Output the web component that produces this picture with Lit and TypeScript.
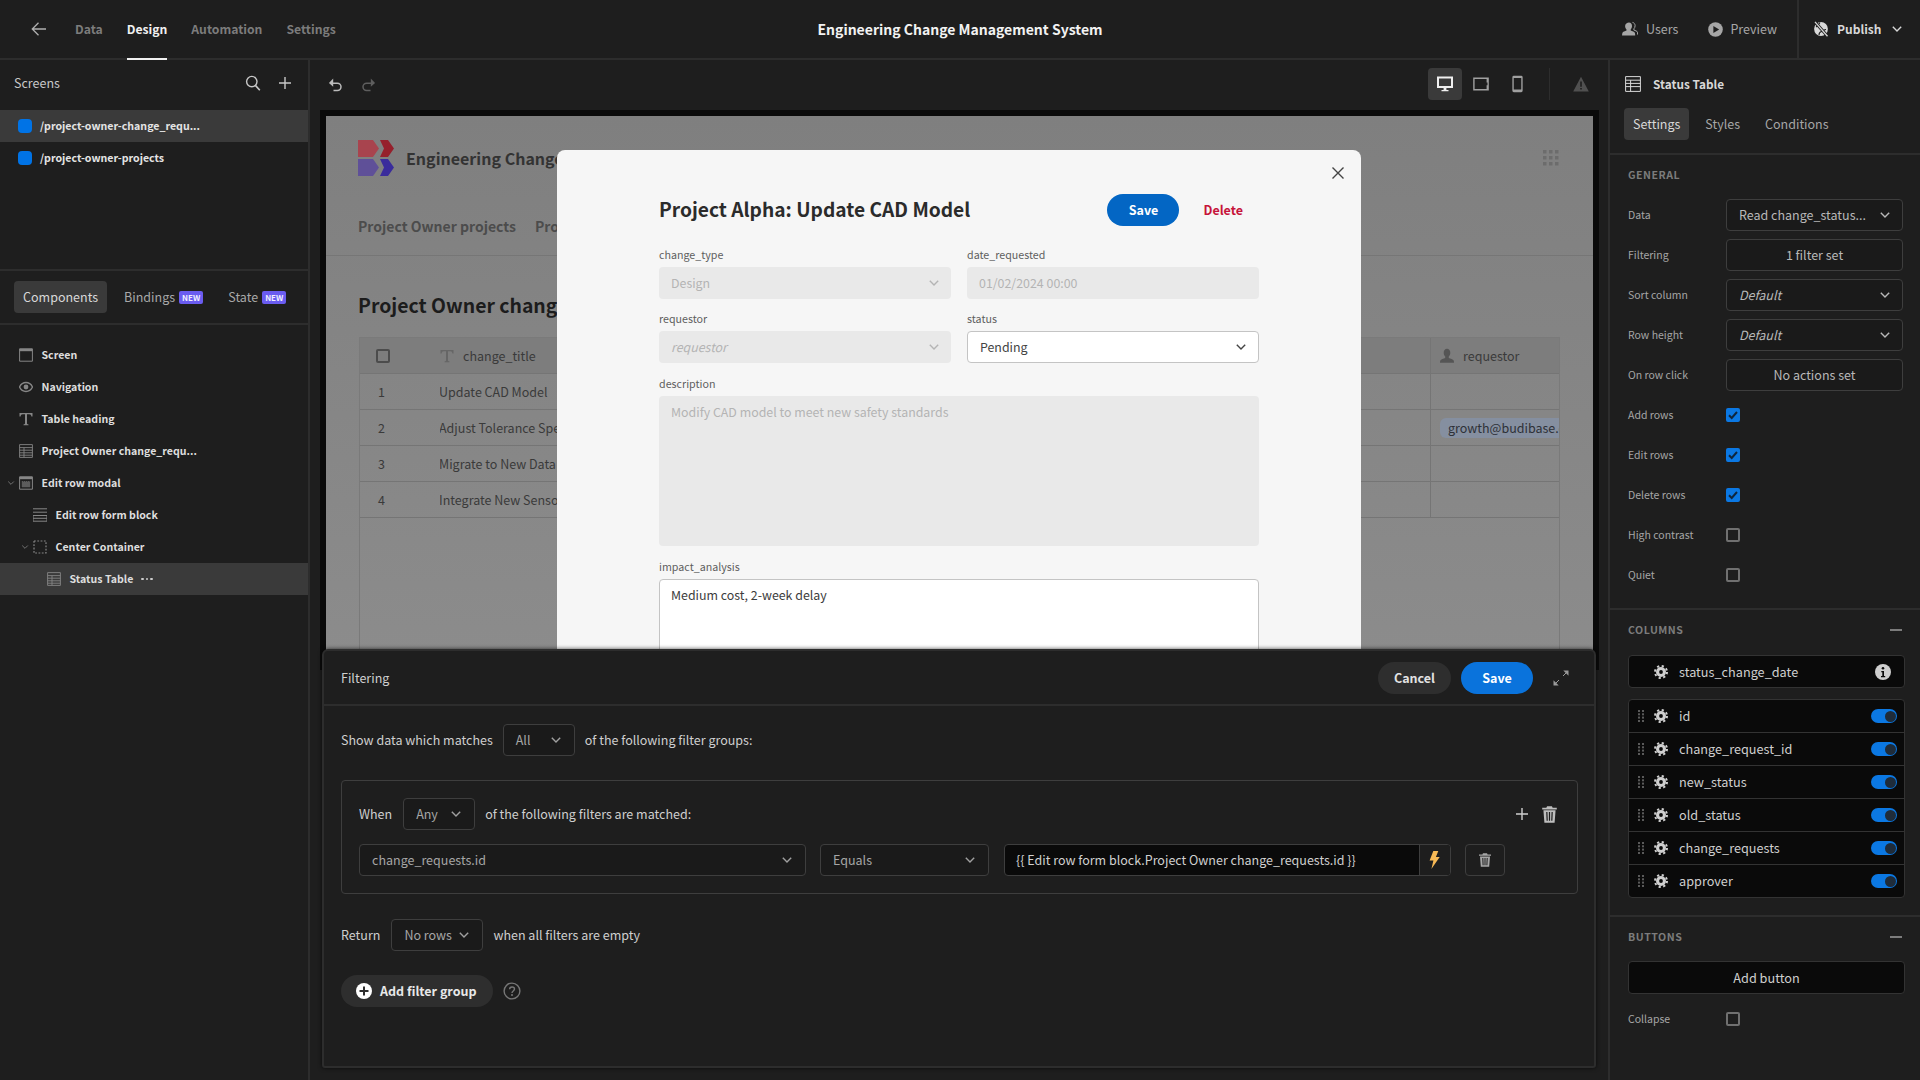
import { LitElement, html, css, svg } from "lit";
import { customElement } from "lit/decorators.js";

const ico = (w: number, h: number, vb: string, body: unknown) =>
  html`<svg class="ico" width=${w} height=${h} viewBox=${vb} fill="none" stroke="currentColor" stroke-width="1.2">${body}</svg>`;

const chevron = (s = 12) => ico(s, s, "0 0 12 12", svg`<path d="M1.800 3.800 6 8l4.200-4.200" stroke-width="1.400"/>`);
const plus = (s = 14) => ico(s, s, "0 0 14 14", svg`<path d="M7 1v12M1 7h12" stroke-width="1.400"/>`);
const backArrow = ico(16, 16, "0 0 16 16", svg`<path d="M15 8H1.500M7.500 1.800 1.300 8l6.200 6.200" stroke-width="1.300"/>`);
const search = ico(16, 16, "0 0 16 16", svg`<circle cx="6.800" cy="6.600" r="5.200" stroke-width="1.400"/><path d="m10.600 10.600 4.200 4.600" stroke-width="1.600"/>`);
const undo = ico(16, 16, "0 0 16 16", svg`<path d="M3 7.200h7.400a3.600 3.600 0 0 1 0 7.200H6.500" stroke-width="1.500"/><path d="M6.200 2.800 1.900 7.200l4.300 3.800z" fill="currentColor" stroke="none" transform="translate(0 -0.2)"/>`);
const redo = ico(16, 16, "0 0 16 16", svg`<path d="M13 7.200H5.600a3.600 3.600 0 0 0 0 7.200h3.900" stroke-width="1.500"/><path d="m9.800 2.800 4.300 4.400-4.300 3.800z" fill="currentColor" stroke="none" transform="translate(0 -0.2)"/>`);
const monitor = ico(16, 16, "0 0 16 16", svg`<path fill="currentColor" stroke="none" fill-rule="evenodd" d="M0 .5h16v11.500H0zM2 2.400v7.700h12V2.400zM6.600 12h2.800v2h2.100v1.300h-7V14h2.100z"/>`);
const tablet = ico(16, 16, "0 0 16 16", svg`<path fill="currentColor" stroke="none" fill-rule="evenodd" d="M.2 1.500h15.600v13H.2zM1.600 2.900v10.200h12V9.200h.9V6.600h-.9V2.900z"/>`);
const phone = ico(11, 18, "0 0 12 18", svg`<path fill="currentColor" stroke="none" fill-rule="evenodd" d="M2 0h8a1.600 1.600 0 0 1 1.600 1.600v14.800A1.600 1.600 0 0 1 10 18H2a1.600 1.600 0 0 1-1.600-1.600V1.600A1.600 1.600 0 0 1 2 0zM1.900 2.400v12.600h8.200V2.400z"/>`);
const warn = ico(16, 16, "0 0 16 16", svg`<path fill="currentColor" stroke="none" fill-rule="evenodd" d="M8 .8 15.800 15.400H.2zM7.200 5.500v5.300h1.600V5.500zM7.200 12v1.600h1.600V12z"/>`);
const tableIc = (s = 14) => ico(s, s, "0 0 14 14", svg`<path d="M.6.600h12.800v12.800H.6zM.6 3.600h12.800M.6 6.200h12.800M.6 8.800h12.800M.6 11.200h12.800M5 3.600v9.800" stroke-width=".9"/>`);
const tableBig = ico(16, 16, "0 0 16 16", svg`<path d="M.6.600h14.800v14.800H.6zM.6 4.200h14.800M.6 7.400h14.800M.6 10.600h14.800M5.600 4.200v11.200" stroke-width="1"/>`);
const person = (s = 16) => ico(s, s, "0 0 16 16", svg`<path fill="currentColor" stroke="none" d="M8 .8c2 0 3.300 1.700 3.300 3.900 0 1.600-.7 3-1.500 3.800v1.400c1.500.6 4.400 1.300 4.900 2.600.3.900.3 1.700.3 2.200H1c0-.5 0-1.300.3-2.200.5-1.300 3.400-2 4.900-2.600V8.500c-.8-.8-1.500-2.200-1.500-3.800C4.700 2.500 6 .8 8 .8z"/>`);
const users = ico(16, 16, "0 0 16 16", svg`<path fill="currentColor" stroke="none" d="M7 1.500c1.800 0 3 1.500 3 3.500 0 1.400-.6 2.700-1.300 3.400v1.200c1.500.6 3.800 1.200 4.200 2.300.2.800.3 2 .3 2.600H.1c0-.6 0-1.800.3-2.600.4-1.100 2.600-1.700 4.100-2.300V8.400C3.700 7.700 3.100 6.400 3.100 5c0-2 2.100-3.500 3.900-3.500z"/><path d="M10.500 1.400c1.700.3 2.600 1.800 2.600 3.300 0 1.400-.6 2.400-1.200 3.100v1.300c1.200.5 3.400 1 3.600 2.100l.1 2.400" stroke-width="1"/>`);
const play = ico(15, 15, "0 0 14 14", svg`<circle cx="7" cy="7" r="6.800" fill="currentColor" stroke="none"/><path d="M5 3.700 10.400 7 5 10.300z" fill="#1e1e1e" stroke="none"/>`);
const globe = ico(16, 16, "0 0 16 16", svg`<circle cx="8" cy="8" r="6.900" fill="currentColor" stroke="none"/><path d="M3 6c2-1 3-3 4-4.500M6 14c0-2 1-3 2.500-3.500 2-.5 2.500-2 4.500-2" stroke="#1e1e1e" stroke-width="1.100"/><path d="M2 .9 14.500 15.200" stroke="#1e1e1e" stroke-width="3"/><path d="M2 .9 14.500 15.200" stroke="currentColor" stroke-width="1.300"/>`);
const closeX = ico(14, 14, "0 0 14 14", svg`<path d="m1.500 1.500 11 11m0-11-11 11" stroke-width="1.400"/>`);
const gear = ico(14, 14, "0 0 14 14", svg`<circle cx="7" cy="7" r="5" fill="currentColor" stroke="none"/><circle cx="7" cy="7" r="6" stroke-width="2" stroke-dasharray="2.200 2.512"/><circle cx="7" cy="7" r="1.900" fill="#0a0a0a" stroke="none"/>`);
const info = ico(16, 16, "0 0 16 16", svg`<circle cx="8" cy="8" r="8" fill="currentColor" stroke="none"/><circle cx="8" cy="4.300" r="1.300" fill="#0a0a0a" stroke="none"/><path d="M6.300 7h2.700v5h1.200v1.200H6v-1.200h1.300V8.200h-1z" fill="#0a0a0a" stroke="none"/>`);
const trash = (w = 12, h = 14) => ico(w, h, "0 0 12 14", svg`<path fill="currentColor" stroke="none" fill-rule="evenodd" d="M4 .3h4l.6 1.200H12v1.300H0V1.500h3.400zM1 3.500h10l-.8 10.200H1.800zM3.300 5l.3 7.200h1L4.300 5zM5.500 5v7.200h1V5zM7.700 5l-.3 7.200h1L8.700 5z"/>`);
const bolt = ico(11, 18, "0 0 11 18", svg`<path d="M4.300 0h5L6.900 6h3.800L2.400 18l2-8.500H.6z" fill="#f7b955" stroke="none"/>`);
const expand = ico(16, 16, "0 0 16 16", svg`<path d="M15 1 10 6M1 15l5-5" stroke-width="1"/><path d="M15.500.5v5.200L10.300.5zM.5 15.500v-5.200l5.200 5.200z" fill="currentColor" stroke="none"/>`);
const help = ico(18, 18, "0 0 18 18", svg`<circle cx="9" cy="9" r="7.900" stroke-width="1.400"/><path d="M6.600 7.200C6.700 5.600 7.800 5 9 5c1.400 0 2.500.8 2.500 2.100 0 1.800-2.500 1.900-2.500 3.800" stroke-width="1.400"/><circle cx="9" cy="13" r="1" fill="currentColor" stroke="none"/>`);
const plusCircle = ico(16, 16, "0 0 16 16", svg`<circle cx="8" cy="8" r="8" fill="currentColor" stroke="none"/><path d="M8 3.500v9M3.500 8h9" stroke="#2e2e2e" stroke-width="2"/>`);
const tIcon = (s = 14) => ico(s, s, "0 0 14 14", svg`<path fill="currentColor" stroke="none" d="M.5 1h13v3.600h-1.100c-.2-1.500-.8-2.300-2.300-2.300H8v9.300c0 .5.300.8 1.500.8v.9H4.500v-.9c1.200 0 1.500-.3 1.500-.8V2.300H3.900c-1.500 0-2.100.8-2.300 2.300H.5z"/>`);
const screenIc = ico(14, 14, "0 0 14 14", svg`<path d="M.6.800h12.800v12.400H.6z" stroke-width="1"/><path fill="currentColor" stroke="none" d="M.6.800h12.800v2.400H.6z"/>`);
const eyeIc = ico(14, 14, "0 0 14 14", svg`<path d="M.5 7C2 3.800 4.400 2.500 7 2.500S12 3.800 13.500 7C12 10.200 9.600 11.500 7 11.500S2 10.200.5 7z" stroke-width="1.400"/><circle cx="7" cy="7" r="2.400" fill="currentColor" stroke="none"/>`);
const modalIc = ico(14, 14, "0 0 14 14", svg`<path d="M.6.800h12.800v12.400H.6z" stroke-width="1"/><path fill="currentColor" stroke="none" d="M.6.800h12.800v2.400H.6z"/><path d="M3 5.500h8v5.500H3z" fill="currentColor" opacity=".6" stroke-dasharray="1 1" stroke-width="1"/>`);
const formIc = ico(14, 14, "0 0 14 14", svg`<path d="M0 .8h14M0 4.200h14M0 7.500h14v5.700H0zM0 10.300h14" stroke-width="1"/>`);
const dashed = ico(14, 14, "0 0 14 14", svg`<path d="M1 1h12v12H1z" stroke-width="1.200" stroke-dasharray="1.800 1.500"/>`);
const dragDots = html`<svg class="ico" width="6" height="12" viewBox="0 0 6 12" fill="#5a5a5a"><rect x="0" y="0" width="2" height="2"/><rect x="4" y="0" width="2" height="2"/><rect x="0" y="3.300" width="2" height="2"/><rect x="4" y="3.300" width="2" height="2"/><rect x="0" y="6.600" width="2" height="2"/><rect x="4" y="6.600" width="2" height="2"/><rect x="0" y="10" width="2" height="2"/><rect x="4" y="10" width="2" height="2"/></svg>`;
const checkMark = ico(14, 14, "0 0 14 14", svg`<path d="m3 7.300 2.700 2.700L11 4" stroke="#10263c" stroke-width="2"/>`);
const appGrid = html`<svg class="ico" width="16" height="16" viewBox="0 0 16 16" fill="#6c6c6c">${[0, 6, 12].flatMap((y) => [0, 6, 12].map((x) => svg`<rect x=${x} y=${y} width="3.500" height="3.500"/>`))}</svg>`;
const logo = html`<svg class="ico" width="36" height="36" viewBox="0 0 36 36"><path fill="#a8444e" d="M0 0h15l6 8.500-6 8.500H0z"/><path fill="#96202c" d="M22 0h8l6 8.500-6 8.500h-8l4-8.500z"/><path fill="#5f5098" d="M0 19h15l6 8.500-6 8.500H0z"/><path fill="#3a2c9c" d="M22 19h8l6 8.500-6 8.500h-8l4-8.500z"/></svg>`;

@customElement("app-root")
export class AppRoot extends LitElement {
  static styles = css`
    :host { display: block; width: 100%; height: 100vh; overflow: hidden; background: #1e1e1e; color: #c8c8c8;
      font-family: "Noto Sans CJK SC", "Noto Sans", sans-serif; font-size: 12.5px; line-height: 18px; }
    * { box-sizing: border-box; }
    .ico { display: block; flex: none; }
    .app { display: flex; flex-direction: column; height: 100%; }

    .top { height: 60px; flex: none; display: grid; grid-template-columns: 1fr auto 1fr; border-bottom: 2px solid #2d2d2d; }
    .top-l { display: flex; align-items: center; padding-left: 31px; color: #b0b0b0; height: 58px; }
    .tabs { display: flex; height: 60px; gap: 24px; margin-left: 28px; align-self: flex-start; }
    .tab { display: flex; align-items: center; height: 60px; padding-bottom: 2px; color: #7c7c7c; font-weight: 600; font-size: 12.200px; }
    .tab.on { color: #f0f0f0; box-shadow: inset 0 -2px 0 #f0f0f0; }
    .title { align-self: center; font-weight: 600; font-size: 14px; color: #f2f2f2; }
    .top-r { display: flex; justify-content: flex-end; align-items: center; height: 58px; }
    .act { display: flex; align-items: center; gap: 8px; color: #a6a6a6; margin-right: 30px; }
    .act + .act { margin-right: 20px; gap: 7px; }
    .publish { display: flex; align-items: center; gap: 8px; height: 58px; width: 123px; padding: 0 0 0 14px; border-left: 2px solid #2d2d2d; color: #d8d8d8; font-weight: 600; font-size: 12px; }
    .publish .ico:last-child { margin-left: 2px; }

    .main { flex: 1; display: grid; grid-template-columns: 310px 1fr 310px; min-height: 0; }

    .left { border-right: 2px solid #2d2d2d; display: flex; flex-direction: column; }
    .sc-head { height: 50px; padding: 0 16px 4px 14px; display: flex; align-items: center; color: #c8c8c8; }
    .sc-head .grow { flex: 1; }
    .sc-head .ico:last-child { margin-left: 17px; }
    .sc-list { height: 161px; border-bottom: 2px solid #2d2d2d; }
    .sc-item { height: 32px; display: flex; align-items: center; gap: 8px; padding-left: 18px; font-size: 10.600px; font-weight: 600; color: #e4e4e4; }
    .sc-item.on { background: #3a3a3a; }
    .dot { width: 14px; height: 14px; border-radius: 4px; background: #0073e6; flex: none; }
    .ptabs { height: 54px; border-bottom: 2px solid #2d2d2d; display: flex; align-items: center; padding-left: 14px; color: #a8a8a8; }
    .ptab { height: 32px; display: flex; align-items: center; padding: 0 9px; border-radius: 4px; }
    .ptab.on { background: #3a3a3a; color: #d8d8d8; margin-right: 8px; }
    .ptab + .ptab + .ptab { margin-left: 7px; }
    .new { background: #6a5cf0; color: #f0f0ff; font-size: 8px; font-weight: 700; line-height: 13px; padding: 0 3px; height: 13px; border-radius: 2px; margin-left: 4px; }
    .tree { padding-top: 14px; }
    .node { height: 32px; display: flex; align-items: center; font-size: 10.600px; font-weight: 600; color: #dedede; }
    .node.d0 { padding-left: 19px; }
    .node.d1 { padding-left: 33px; }
    .node.d2 { padding-left: 47px; }
    .node.on { background: #3a3a3a; }
    .node .nic { color: #868686; margin-right: 8.500px; }
    .node .car { width: 12px; margin-right: 2px; color: #777; margin-left: -14px; display: flex; justify-content: center; }
    .more { margin-left: 8px; color: #d0d0d0; display: flex; gap: 2px; }
    .more i { width: 2.500px; height: 2.500px; background: #ccc; border-radius: 50%; display: block; }

    .center { position: relative; display: flex; flex-direction: column; min-width: 0; }
    .tool { height: 50px; flex: none; display: flex; align-items: center; padding: 0 0 2px 17px; color: #bbb; }
    .tool .redo { color: #5e5e5e; margin-left: 18px; }
    .devs { margin-left: auto; display: flex; align-items: center; padding-right: 21px; }
    .dev { width: 34px; height: 32px; display: flex; align-items: center; justify-content: center; border-radius: 4px; color: #a0a0a0; margin-left: 2px; }
    .dev.on { background: #3a3a3a; color: #f0f0f0; }
    .dev.phone { margin-right: 1px; }
    .sep { width: 1px; height: 32px; background: #2d2d2d; margin: 0 23px 0 14px; }
    .warnic { color: #505050; }
    .frame { flex: none; height: 560px; margin: 0 11px 0 10px; border: 6px solid #0a0a0a; border-bottom: 0; overflow: hidden; position: relative; }
    .preview { height: 100%; background: linear-gradient(#7f7f7f, #8c8c8c); color: #333; display: flex; flex-direction: column; }
    .pv-head { height: 140px; flex: none; border-bottom: 1px solid #767676; padding: 24px 32px 0 32px; }
    .pv-brand { display: flex; align-items: center; gap: 12px; height: 36px; font-size: 16px; font-weight: 600; color: #333; }
    .pv-brand .ico:last-child { margin-left: auto; margin-right: 2px; }
    .pv-nav { display: flex; gap: 19px; margin-top: 36px; font-size: 14px; font-weight: 600; color: #4c4c4c; line-height: 28px; }
    .pv-h { font-size: 19.400px; font-weight: 600; color: #1c1c1c; line-height: 30px; margin: 34px 0 0 32px; flex: none; }
    .pv-table { margin: 17px 33px 0 33px; flex: 1; border: 1px solid #7a7a7a; border-bottom: 0; font-size: 12.500px; color: #3a3a3a; }
    .pv-row { height: 36px; display: grid; grid-template-columns: 80px 990px 1fr; border-bottom: 1px solid #757575; align-items: stretch; }
    .pv-row.hd { background: #7d7d7d; }
    .pv-c { display: flex; align-items: center; gap: 9px; min-width: 0; overflow: hidden; white-space: nowrap; }
    .pv-c.n { padding-left: 18px; }
    .pv-c.r { border-left: 1px solid #757575; padding-left: 9px; gap: 8px; }
    .pv-c .txt { margin-left: -1px; }
    .pv-cb { width: 14px; height: 14px; border: 2px solid #4c4c4c; border-radius: 2px; margin-left: -2px; }
    .pv-ti { color: #666; }
    .pv-pi { color: #555; margin-left: -1px; }
    .pill { background: #858fa0; border-radius: 6px 0 0 6px; height: 20px; line-height: 20px; padding-left: 8px; flex: none; width: 120px; overflow: hidden; color: #2e3138; }

    .modal { position: absolute; left: 231px; top: 34px; width: 804px; height: 600px; background: #f6f6f6; border-radius: 8px 8px 0 0; padding: 44px 102px 0 102px; }
    .modal .x { position: absolute; right: 16px; top: 16px; color: #444; }
    .m-head { display: flex; align-items: center; height: 32px; margin-bottom: 18px; }
    .m-title { font-size: 19.200px; font-weight: 600; color: #2b2b2b; flex: 1; line-height: 30px; margin-top: -2px; }
    .m-save { width: 72px; height: 32px; background: #0366c4; color: #fff; font-weight: 600; border-radius: 16px; display: flex; align-items: center; justify-content: center; }
    .m-del { color: #c6133a; font-weight: 600; margin: 0 16px 0 24px; }
    .m-grid { display: grid; grid-template-columns: 292px 292px; column-gap: 16px; row-gap: 9px; }
    .f { display: flex; flex-direction: column; font-size: 10.700px; color: #5e5e5e; }
    .f.w { grid-column: 1 / 3; margin-top: 1px; }
    .f > span { height: 23px; line-height: 21px; }
    .fld { height: 32px; border-radius: 4px; background: #e9e9e9; color: #b4b4b4; font-size: 12.400px; display: flex; align-items: center; justify-content: space-between; padding: 0 11px 0 12px; }
    .fld.on { background: #fff; border: 1px solid #c4c4c4; color: #444; }
    .fld i { font-style: italic; }
    .fld.ta { height: 150px; align-items: flex-start; padding-top: 7px; }
    .fld.tb { height: 200px; background: #fff; border: 1px solid #c4c4c4; color: #3c3c3c; align-items: flex-start; padding: 6px 0 0 11px; }

    .drawer { position: absolute; left: 12px; top: 589px; width: 1274px; height: 419px; background: #1e1e1e; border: 2px solid #2d2d2d; border-radius: 6px 6px 3px 3px; box-shadow: 0 0 4px rgba(0,0,0,.7); display: flex; flex-direction: column; }
    .d-head { height: 55px; flex: none; display: flex; align-items: center; padding: 0 25px 0 17px; border-bottom: 2px solid #2d2d2d; color: #d0d0d0; }
    .d-head .grow { flex: 1; }
    .btn { height: 32px; border-radius: 16px; display: flex; align-items: center; justify-content: center; font-weight: 600; }
    .btn.c { width: 73px; background: #2e2e2e; color: #e2e2e2; margin-right: 10px; }
    .btn.s { width: 72px; background: #0a73dc; color: #fff; margin-right: 20px; }
    .d-exp { color: #9a9a9a; }
    .d-body { padding: 18px 17px 0 17px; color: #cfcfcf; display: flex; flex-direction: column; }
    .line { display: flex; align-items: center; height: 32px; gap: 10px; }
    .line .lead { margin-right: 1px; }
    .sel { height: 32px; border: 1px solid #3e3e3e; border-radius: 4px; background: #1a1a1a; color: #a6a6a6; display: flex; align-items: center; justify-content: space-between; padding: 0 12px 0 12px; }
    .sel .ico { color: #a0a0a0; }
    .sel.w72 { width: 72px; }
    .sel.w92 { width: 92px; }
    .group { margin-top: 24px; height: 114px; border: 1px solid #3e3e3e; border-radius: 4px; padding: 17px 17px 0 17px; width: 1237px; }
    .gtools { margin-left: auto; display: flex; align-items: center; gap: 13px; color: #cfcfcf; padding-right: 3px; }
    .gtools .tr { color: #bdbdbd; }
    .frow { display: flex; gap: 14px; margin-top: 14px; height: 32px; }
    .fw1 { width: 447px; }
    .fw2 { width: 169px; }
    .bind { width: 447px; height: 32px; border: 1px solid #3e3e3e; border-radius: 4px; background: #0a0a0a; display: flex; align-items: stretch; color: #d0d0d0; margin-left: 1px; }
    .bind .t { flex: 1; display: flex; align-items: center; padding-left: 11px; }
    .bind .b { width: 31px; border-left: 1px solid #3e3e3e; background: #1e1e1e; display: flex; align-items: center; justify-content: center; border-radius: 0 3px 3px 0; padding-right: 2px; }
    .delb { width: 40px; height: 32px; border: 1px solid #3e3e3e; border-radius: 4px; display: flex; align-items: center; justify-content: center; color: #a8a8a8; }
    .mt { margin-top: 25px; }
    .addg { display: flex; align-items: center; margin-top: 24px; gap: 10px; }
    .addb { width: 152px; height: 32px; border-radius: 16px; background: #2e2e2e; display: flex; align-items: center; gap: 8px; padding-left: 15px; color: #e8e8e8; font-weight: 600; }
    .addb .ico { color: #fff; }
    .hlp { color: #777; }

    .right { border-left: 2px solid #2d2d2d; margin-left: -2px; display: flex; flex-direction: column; width: 312px; }
    .r-head { height: 48px; display: flex; align-items: center; gap: 12px; padding-left: 15px; font-weight: 600; font-size: 11.800px; color: #d8d8d8; }
    .r-tabs { height: 47px; display: flex; align-items: flex-start; padding-left: 14px; color: #a6a6a6; border-bottom: 2px solid #2d2d2d; gap: 7px; }
    .r-tab { height: 32px; padding: 0 9px; display: flex; align-items: center; border-radius: 4px; }
    .r-tab.on { background: #3a3a3a; color: #d8d8d8; }
    .r-sec { padding: 11px 16px 0 18px; }
    .r-sec.gen { height: 455px; border-bottom: 2px solid #2d2d2d; }
    .r-sec.col { height: 307px; border-bottom: 2px solid #2d2d2d; }
    .sec-t { height: 18px; display: flex; align-items: center; justify-content: space-between; font-size: 10.600px; font-weight: 600; color: #7c7c7c; letter-spacing: .5px; }
    .sec-t b { width: 12px; height: 2px; background: #7c7c7c; display: block; margin-right: 2px; }
    .props { margin-top: 15px; display: flex; flex-direction: column; gap: 8px; }
    .prop { display: grid; grid-template-columns: 98px 177px; align-items: center; height: 32px; font-size: 10.500px; color: #a6a6a6; }
    .prop .in { height: 32px; border: 1px solid #3e3e3e; border-radius: 4px; background: #1a1a1a; color: #b8b8b8; font-size: 12.500px; display: flex; align-items: center; justify-content: space-between; padding: 0 11px 0 12px; white-space: nowrap; }
    .prop .in.c { justify-content: center; padding: 0; }
    .prop .in em { font-style: italic; }
    .cb { width: 14px; height: 14px; border: 2px solid #707070; border-radius: 2px; display: flex; align-items: center; justify-content: center; }
    .cb.on { background: #0b78e3; border-color: #0b78e3; }
    .cb.on .ico { margin: -2px; }
    .colbox { background: #0a0a0a; border: 1px solid #333; border-radius: 4px; width: 277px; color: #cfcfcf; font-size: 12.700px; }
    .colbox.one { margin-top: 16px; height: 33px; display: flex; align-items: center; padding: 0 13px 0 25px; }
    .colbox.one .nm { flex: 1; margin-left: 11px; }
    .colbox.one .inf { color: #7e7e7e; }
    .colbox.list { margin-top: 11px; }
    .crow { height: 33px; display: flex; align-items: center; padding: 0 7px 0 9px; border-bottom: 1px solid #333; }
    .crow:last-child { border-bottom: 0; height: 32px; }
    .crow .gr { margin-left: 10px; color: #cfcfcf; }
    .colbox.one .ico:first-child { color: #cfcfcf; }
    .crow .nm { flex: 1; margin-left: 11px; }
    .tg { width: 26px; height: 14px; border-radius: 7px; background: #0b78e3; position: relative; }
    .tg::after { content: ""; position: absolute; right: 1.500px; top: 1.500px; width: 11px; height: 11px; border-radius: 50%; background: #1f2c3a; }
    .add { margin-top: 15px; height: 33px; width: 277px; background: #0a0a0a; border: 1px solid #333; border-radius: 4px; display: flex; align-items: center; justify-content: center; color: #cfcfcf; font-size: 12.700px; }
    .prop.last { margin-top: 9px; }
  `;

  private pvRows = [
    ["1", "Update CAD Model", ""],
    ["2", "Adjust Tolerance Specifications", "growth@budibase.com"],
    ["3", "Migrate to New Data Format", ""],
    ["4", "Integrate New Sensor", ""],
  ];

  private tree = [
    { d: 0, ic: screenIc, t: "Screen" },
    { d: 0, ic: eyeIc, t: "Navigation" },
    { d: 0, ic: tIcon(14), t: "Table heading" },
    { d: 0, ic: tableIc(14), t: "Project Owner change_requ..." },
    { d: 0, ic: modalIc, t: "Edit row modal", car: true },
    { d: 1, ic: formIc, t: "Edit row form block" },
    { d: 1, ic: dashed, t: "Center Container", car: true },
    { d: 2, ic: tableIc(14), t: "Status Table", on: true },
  ];

  render() {
    return html`<div class="app">
      ${this.renderTop()}
      <div class="main">
        ${this.renderLeft()}
        ${this.renderCenter()}
        ${this.renderRight()}
      </div>
    </div>`;
  }

  renderTop() {
    return html`<header class="top">
      <div class="top-l">${backArrow}
        <nav class="tabs">
          <div class="tab">Data</div><div class="tab on">Design</div><div class="tab">Automation</div><div class="tab">Settings</div>
        </nav>
      </div>
      <div class="title">Engineering Change Management System</div>
      <div class="top-r">
        <div class="act">${users}Users</div>
        <div class="act">${play}Preview</div>
        <div class="publish">${globe}Publish ${chevron()}</div>
      </div>
    </header>`;
  }

  renderLeft() {
    return html`<aside class="left">
      <div class="sc-head"><span>Screens</span><span class="grow"></span>${search}${plus()}</div>
      <div class="sc-list">
        <div class="sc-item on"><span class="dot"></span>/project-owner-change_requ...</div>
        <div class="sc-item"><span class="dot"></span>/project-owner-projects</div>
      </div>
      <div class="ptabs">
        <div class="ptab on">Components</div>
        <div class="ptab">Bindings<span class="new">NEW</span></div>
        <div class="ptab">State<span class="new">NEW</span></div>
      </div>
      <div class="tree">
        ${this.tree.map((n) => html`<div class="node ${n.on ? "on" : ""} ${"d" + n.d}">
          ${n.car ? html`<span class="car">${chevron(8)}</span>` : ""}
          <span class="nic">${n.ic}</span>${n.t}
          ${n.on ? html`<span class="more"><i></i><i></i><i></i></span>` : ""}
        </div>`)}
      </div>
    </aside>`;
  }

  renderCenter() {
    return html`<section class="center">
      <div class="tool">${undo}<span class="redo">${redo}</span>
        <div class="devs">
          <div class="dev on">${monitor}</div><div class="dev">${tablet}</div><div class="dev phone">${phone}</div>
          <div class="sep"></div><span class="warnic">${warn}</span>
        </div>
      </div>
      <div class="frame">
        <div class="preview">
          <div class="pv-head">
            <div class="pv-brand">${logo}<span>Engineering Change Management System</span>${appGrid}</div>
            <div class="pv-nav"><span>Project Owner projects</span><span>Project Owner change requests</span></div>
          </div>
          <div class="pv-h">Project Owner change_requests</div>
          <div class="pv-table">
            <div class="pv-row hd">
              <div class="pv-c n"><span class="pv-cb"></span></div>
              <div class="pv-c"><span class="pv-ti">${tIcon(14)}</span>change_title</div>
              <div class="pv-c r"><span class="pv-pi">${person(16)}</span>requestor</div>
            </div>
            ${this.pvRows.map((r) => html`<div class="pv-row">
              <div class="pv-c n">${r[0]}</div>
              <div class="pv-c"><span class="txt">${r[1]}</span></div>
              <div class="pv-c r">${r[2] ? html`<span class="pill">${r[2]}</span>` : ""}</div>
            </div>`)}
          </div>
        </div>
        ${this.renderModal()}
      </div>
      ${this.renderDrawer()}
    </section>`;
  }

  renderModal() {
    return html`<div class="modal">
      <span class="x">${closeX}</span>
      <div class="m-head">
        <div class="m-title">Project Alpha: Update CAD Model</div>
        <div class="m-save">Save</div><div class="m-del">Delete</div>
      </div>
      <div class="m-grid">
        <label class="f"><span>change_type</span><div class="fld">Design ${chevron()}</div></label>
        <label class="f"><span>date_requested</span><div class="fld">01/02/2024 00:00</div></label>
        <label class="f"><span>requestor</span><div class="fld"><i>requestor</i> ${chevron()}</div></label>
        <label class="f"><span>status</span><div class="fld on">Pending ${chevron()}</div></label>
        <label class="f w"><span>description</span><div class="fld ta">Modify CAD model to meet new safety standards</div></label>
        <label class="f w"><span>impact_analysis</span><div class="fld tb">Medium cost, 2-week delay</div></label>
      </div>
    </div>`;
  }

  renderDrawer() {
    return html`<div class="drawer">
      <div class="d-head"><span>Filtering</span><span class="grow"></span>
        <div class="btn c">Cancel</div><div class="btn s">Save</div><span class="d-exp">${expand}</span>
      </div>
      <div class="d-body">
        <div class="line"><span>Show data which matches</span><div class="sel w72">All ${chevron()}</div><span>of the following filter groups:</span></div>
        <div class="group">
          <div class="line"><span class="lead">When</span><div class="sel w72">Any ${chevron()}</div><span>of the following filters are matched:</span>
            <span class="gtools">${plus()}<span class="tr">${trash(15, 17)}</span></span></div>
          <div class="frow">
            <div class="sel fw1">change_requests.id ${chevron()}</div>
            <div class="sel fw2">Equals ${chevron()}</div>
            <div class="bind"><span class="t">{{ Edit row form block.Project Owner change_requests.id }}</span><span class="b">${bolt}</span></div>
            <div class="delb">${trash()}</div>
          </div>
        </div>
        <div class="line mt"><span class="lead">Return</span><div class="sel w92">No rows ${chevron()}</div><span>when all filters are empty</span></div>
        <div class="addg"><div class="addb">${plusCircle}Add filter group</div><span class="hlp">${help}</span></div>
      </div>
    </div>`;
  }

  renderRight() {
    const sel = (l: string, v: unknown) => html`<div class="prop"><span>${l}</span><div class="in">${v} ${chevron()}</div></div>`;
    const btn = (l: string, v: string) => html`<div class="prop"><span>${l}</span><div class="in c">${v}</div></div>`;
    const chk = (l: string, on: boolean) => html`<div class="prop"><span>${l}</span><div class="cb ${on ? "on" : ""}">${on ? checkMark : ""}</div></div>`;
    return html`<aside class="right">
      <div class="r-head">${tableBig}Status Table</div>
      <div class="r-tabs"><div class="r-tab on">Settings</div><div class="r-tab">Styles</div><div class="r-tab">Conditions</div></div>
      <div class="r-sec gen">
        <div class="sec-t">GENERAL</div>
        <div class="props">
          ${sel("Data", "Read change_status...")}
          ${btn("Filtering", "1 filter set")}
          ${sel("Sort column", html`<em>Default</em>`)}
          ${sel("Row height", html`<em>Default</em>`)}
          ${btn("On row click", "No actions set")}
          ${chk("Add rows", true)}${chk("Edit rows", true)}${chk("Delete rows", true)}${chk("High contrast", false)}${chk("Quiet", false)}
        </div>
      </div>
      <div class="r-sec col">
        <div class="sec-t">COLUMNS<b></b></div>
        <div class="colbox one">${gear}<span class="nm">status_change_date</span><span class="inf">${info}</span></div>
        <div class="colbox list">
          ${["id", "change_request_id", "new_status", "old_status", "change_requests", "approver"].map(
            (c) => html`<div class="crow">${dragDots}<span class="gr">${gear}</span><span class="nm">${c}</span><div class="tg"></div></div>`
          )}
        </div>
      </div>
      <div class="r-sec">
        <div class="sec-t">BUTTONS<b></b></div>
        <div class="add">Add button</div>
        <div class="prop last"><span>Collapse</span><div class="cb"></div></div>
      </div>
    </aside>`;
  }
}
